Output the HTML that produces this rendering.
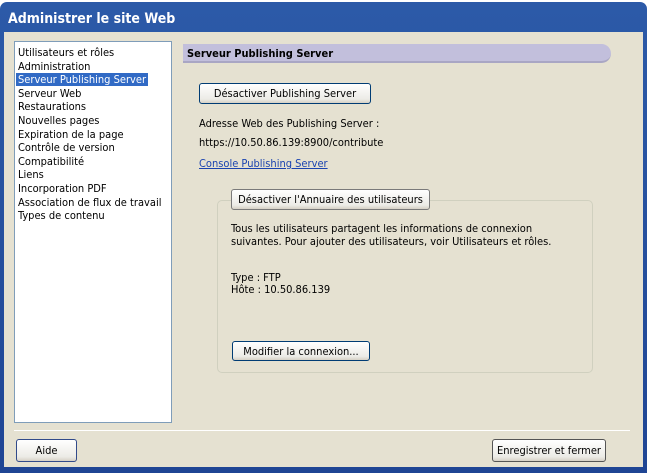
<!DOCTYPE html>
<html><head><style>
*{margin:0;padding:0;box-sizing:border-box}
body{width:649px;height:473px;background:#fff;font-family:Tahoma,"DejaVu Sans Condensed","Liberation Sans",sans-serif;font-size:11px;color:#000;position:relative;overflow:hidden}
.win{position:absolute;left:0;top:2px;width:647px;height:471px;background:linear-gradient(#2c5aa8,#1f4594);border-radius:7px 7px 0 0}
.title{position:absolute;left:8px;top:9px;color:#fff;font-weight:bold;font-size:14px;font-family:"DejaVu Sans Condensed","Liberation Sans",sans-serif}
.body{position:absolute;left:4px;top:32px;width:639px;height:435px;background:#e5e1d1}
.abs{position:absolute}
.list{left:14px;top:41px;width:158px;height:382px;background:#fff;border:1px solid #7f9db9;padding:4px 0 0 3px;line-height:13.6px;font-size:11px;overflow:hidden}
.list div{white-space:nowrap}
.sel span{background:#316ac5;color:#fff;padding:0 2px 0 2px;margin-left:-2px}
.hdr{left:183px;top:44px;width:428px;height:19px;background:#c2bfdc;border-radius:0 10px 10px 0;border-bottom:2px solid #a9a6c4;font-weight:bold;padding:3px 0 0 4px;font-family:"DejaVu Sans Condensed",sans-serif;font-size:11px}
.btn{position:absolute;background:linear-gradient(#fff,#ecebe6 80%,#d6d0c5);border:1px solid #003c74;border-radius:3px;text-align:center;font-size:11px;line-height:19px}
.grp{left:217px;top:200px;width:376px;height:173px;border:1px solid #d0d0bf;border-radius:5px}
.sep{left:14px;top:430px;width:616px;height:1px;background:#aca899;border-bottom:1px solid #fff}
a{color:#1a43b0;text-decoration:underline}
</style></head><body>
<div class="win"><div class="title">Administrer le site Web</div></div>
<div class="body"></div>
<div class="abs list">
<div>Utilisateurs et rôles</div><div>Administration</div><div class="sel"><span>Serveur Publishing Server</span></div><div>Serveur Web</div><div>Restaurations</div><div>Nouvelles pages</div><div>Expiration de la page</div><div>Contrôle de version</div><div>Compatibilité</div><div>Liens</div><div>Incorporation PDF</div><div>Association de flux de travail</div><div>Types de contenu</div>
</div>
<div class="abs hdr">Serveur Publishing Server</div>
<div class="btn" style="left:199px;top:83px;width:172px;height:21px">Désactiver Publishing Server</div>
<div class="abs" style="left:199px;top:117px">Adresse Web des Publishing Server :</div>
<div class="abs" style="left:199px;top:136px">https://10.50.86.139:8900/contribute</div>
<div class="abs" style="left:199px;top:157px"><a>Console Publishing Server</a></div>
<div class="abs grp"></div>
<div class="btn" style="left:231px;top:189px;width:199px;height:21px;border-color:#7a7a7a">Désactiver l'Annuaire des utilisateurs</div>
<div class="abs" style="left:231px;top:222px;line-height:13px">Tous les utilisateurs partagent les informations de connexion<br>suivantes. Pour ajouter des utilisateurs, voir Utilisateurs et rôles.</div>
<div class="abs" style="left:231px;top:272px;line-height:12px">Type : FTP<br>Hôte : 10.50.86.139</div>
<div class="btn" style="left:232px;top:341px;width:138px;height:20px">Modifier la connexion...</div>
<div class="abs sep"></div>
<div class="btn" style="left:16px;top:439px;width:61px;height:23px;line-height:21px;border-color:#314a8a">Aide</div>
<div class="btn" style="left:492px;top:439px;width:114px;height:23px;line-height:21px;border-color:#555">Enregistrer et fermer</div>
</body></html>
